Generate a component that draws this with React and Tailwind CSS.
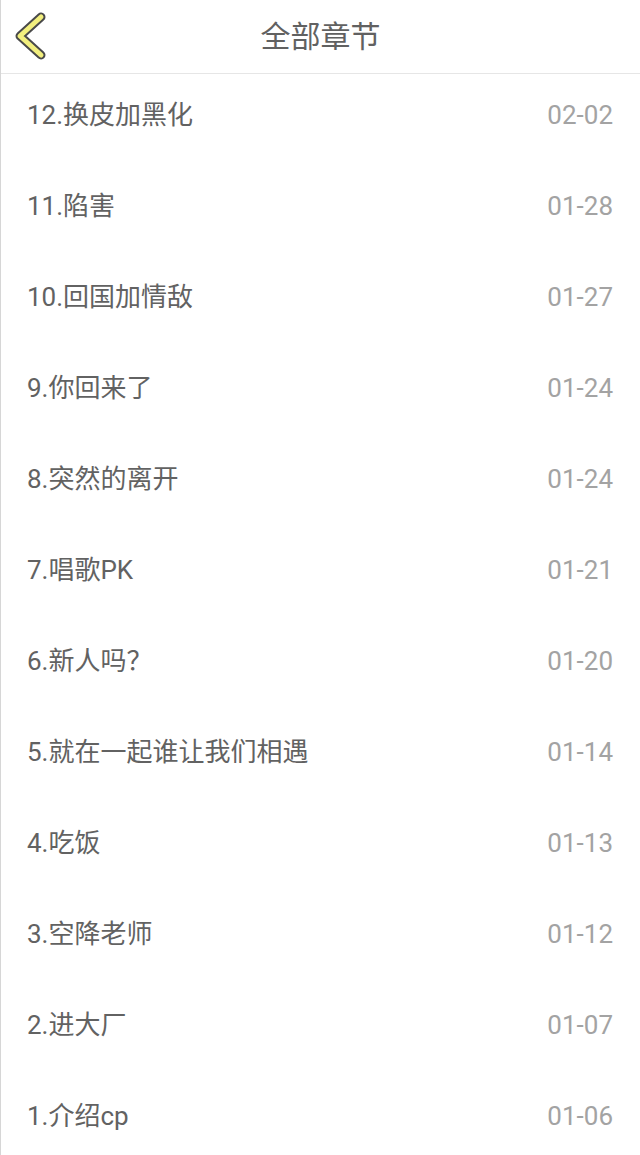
const chapters = [
  { title: "12.换皮加黑化", date: "02-02" },
  { title: "11.陷害", date: "01-28" },
  { title: "10.回国加情敌", date: "01-27" },
  { title: "9.你回来了", date: "01-24" },
  { title: "8.突然的离开", date: "01-24" },
  { title: "7.唱歌PK", date: "01-21" },
  { title: "6.新人吗？", date: "01-20" },
  { title: "5.就在一起谁让我们相遇", date: "01-14" },
  { title: "4.吃饭", date: "01-13" },
  { title: "3.空降老师", date: "01-12" },
  { title: "2.进大厂", date: "01-07" },
  { title: "1.介绍cp", date: "01-06" },
];

function BackIcon() {
  return (
    <svg width="44" height="54" viewBox="0 0 44 54" className="block">
      <path d="M31 9 L10 28 L31 47" fill="none" stroke="#4a4a4a" strokeWidth="9" strokeLinecap="round" strokeLinejoin="round" />
      <path d="M31 9 L10 28 L31 47" fill="none" stroke="#f2ef7e" strokeWidth="5" strokeLinecap="round" strokeLinejoin="round" />
    </svg>
  );
}

export default function App() {
  return (
    <div
      className="w-[640px] h-[1155px] overflow-hidden bg-white border-l border-[#d6d6d6]"
      style={{ fontFamily: 'Roboto, "Noto Sans CJK SC", sans-serif' }}
    >
      {/* Header */}
      <div className="relative h-[74px] border-b border-[#e6e6e6] flex items-center justify-center">
        <button className="absolute left-[9px] top-[8px]">
          <BackIcon />
        </button>
        <h1 className="text-[30px] text-[#616161] leading-none">全部章节</h1>
      </div>

      {/* Chapter list */}
      <ul>
        {chapters.map((c) => (
          <li key={c.title} className="h-[91px] pb-[10px] pl-[26px] pr-[27px] flex items-center justify-between">
            <span className="text-[26px] text-[#626262] leading-none">{c.title}</span>
            <span className="text-[26px] text-[#a3a3a3] leading-none">{c.date}</span>
          </li>
        ))}
      </ul>
    </div>
  );
}
